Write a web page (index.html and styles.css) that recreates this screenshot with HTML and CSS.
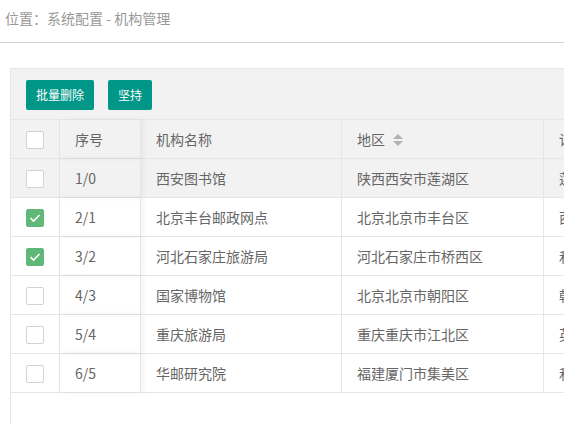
FILE: index.html
```
<!DOCTYPE html>
<html lang="zh">
<head>
<meta charset="utf-8">
<link rel="stylesheet" href="styles.css">
</head>
<body>
<div class="crumb">位置：系统配置 - 机构管理</div>
<div class="panel">
  <div class="toolbar">
    <button class="btn">批量删除</button>
    <button class="btn">坚持</button>
  </div>
  <div class="row head">
    <div class="cell c1"><span class="cb"></span></div>
    <div class="cell c2 fixed">序号</div>
    <div class="cell c3">机构名称</div>
    <div class="cell c4">地区<svg class="sort" width="10" height="14" viewBox="0 0 10 14"><path d="M5 1 L10 6 L0 6 Z" fill="#b2b2b2"/><path d="M0 8 L10 8 L5 13 Z" fill="#b2b2b2"/></svg></div>
    <div class="cell c5">详细地址</div>
  </div>
  <div class="row hover">
    <div class="cell c1"><span class="cb"></span></div>
    <div class="cell c2 fixed">1/0</div>
    <div class="cell c3">西安图书馆</div>
    <div class="cell c4">陕西西安市莲湖区</div>
    <div class="cell c5">莲湖路120号</div>
  </div>
  <div class="row">
    <div class="cell c1"><span class="cb on"><svg width="12" height="10" viewBox="0 0 12 10"><path d="M1.5 5 L4.5 8 L10.5 2" fill="none" stroke="#fff" stroke-width="1.6"/></svg></span></div>
    <div class="cell c2 fixed">2/1</div>
    <div class="cell c3">北京丰台邮政网点</div>
    <div class="cell c4">北京北京市丰台区</div>
    <div class="cell c5">西四环中路</div>
  </div>
  <div class="row">
    <div class="cell c1"><span class="cb on"><svg width="12" height="10" viewBox="0 0 12 10"><path d="M1.5 5 L4.5 8 L10.5 2" fill="none" stroke="#fff" stroke-width="1.6"/></svg></span></div>
    <div class="cell c2 fixed">3/2</div>
    <div class="cell c3">河北石家庄旅游局</div>
    <div class="cell c4">河北石家庄市桥西区</div>
    <div class="cell c5">和平西路</div>
  </div>
  <div class="row">
    <div class="cell c1"><span class="cb"></span></div>
    <div class="cell c2 fixed">4/3</div>
    <div class="cell c3">国家博物馆</div>
    <div class="cell c4">北京北京市朝阳区</div>
    <div class="cell c5">朝阳门内大街</div>
  </div>
  <div class="row">
    <div class="cell c1"><span class="cb"></span></div>
    <div class="cell c2 fixed">5/4</div>
    <div class="cell c3">重庆旅游局</div>
    <div class="cell c4">重庆重庆市江北区</div>
    <div class="cell c5">英利大道</div>
  </div>
  <div class="row">
    <div class="cell c1"><span class="cb"></span></div>
    <div class="cell c2 fixed">6/5</div>
    <div class="cell c3">华邮研究院</div>
    <div class="cell c4">福建厦门市集美区</div>
    <div class="cell c5">和信路</div>
  </div>
  <div class="rest"></div>
</div>
</body>
</html>
```
FILE: styles.css
```
html, body {
  margin: 0;
  padding: 0;
  overflow: hidden;
  background: #fff;
  font-family: "Microsoft YaHei", "Noto Sans CJK SC", "Liberation Sans", sans-serif;
  font-size: 14px;
  color: #666;
}
.crumb {
  height: 36px;
  line-height: 36px;
  padding: 0 0 6px 5px;
  color: #999;
  border-bottom: 1px solid #d2d2d2;
}
.panel {
  margin: 25px 0 0 10px;
  width: 760px;
  border-top: 1px solid #e6e6e6;
  border-left: 1px solid #e6e6e6;
  background: #fff;
}
.toolbar {
  height: 51px;
  box-sizing: border-box;
  padding: 11px 15px 0;
  background: #f2f2f2;
  border-bottom: 1px solid #e6e6e6;
  display: flex;
  gap: 14px;
  align-items: flex-start;
}
.btn {
  height: 30px;
  line-height: 30px;
  padding: 0 10px;
  border: none;
  border-radius: 2px;
  background: #009688;
  color: #fff;
  font-family: inherit;
  font-size: 12px;
}
.row {
  display: flex;
  height: 38px;
  border-bottom: 1px solid #e6e6e6;
  white-space: nowrap;
}
.row.head, .row.hover {
  background: #f2f2f2;
}
.cell {
  box-sizing: content-box;
  height: 38px;
  line-height: 38px;
  padding: 0 15px;
  border-right: 1px solid #e6e6e6;
  display: flex;
  align-items: center;
  flex: none;
  overflow: hidden;
}
.c1 { width: 18px; }
.c2 { width: 50px; }
.c3 { width: 170px; }
.c4 { width: 171px; }
.c5 { width: 200px; }
.fixed {
  box-shadow: 2px 0 6px rgba(0, 0, 0, 0.06);
  position: relative;
  z-index: 1;
}
.cb {
  width: 16px;
  height: 16px;
  border: 1px solid #d2d2d2;
  border-radius: 2px;
  background: #fff;
  display: flex;
  align-items: center;
  justify-content: center;
  margin-top: 2px;
}
.cb.on {
  border-color: #5fb878;
  background: #5fb878;
}
.sort {
  margin-left: 8px;
  margin-top: 1px;
}
.rest {
  height: 60px;
}
```
